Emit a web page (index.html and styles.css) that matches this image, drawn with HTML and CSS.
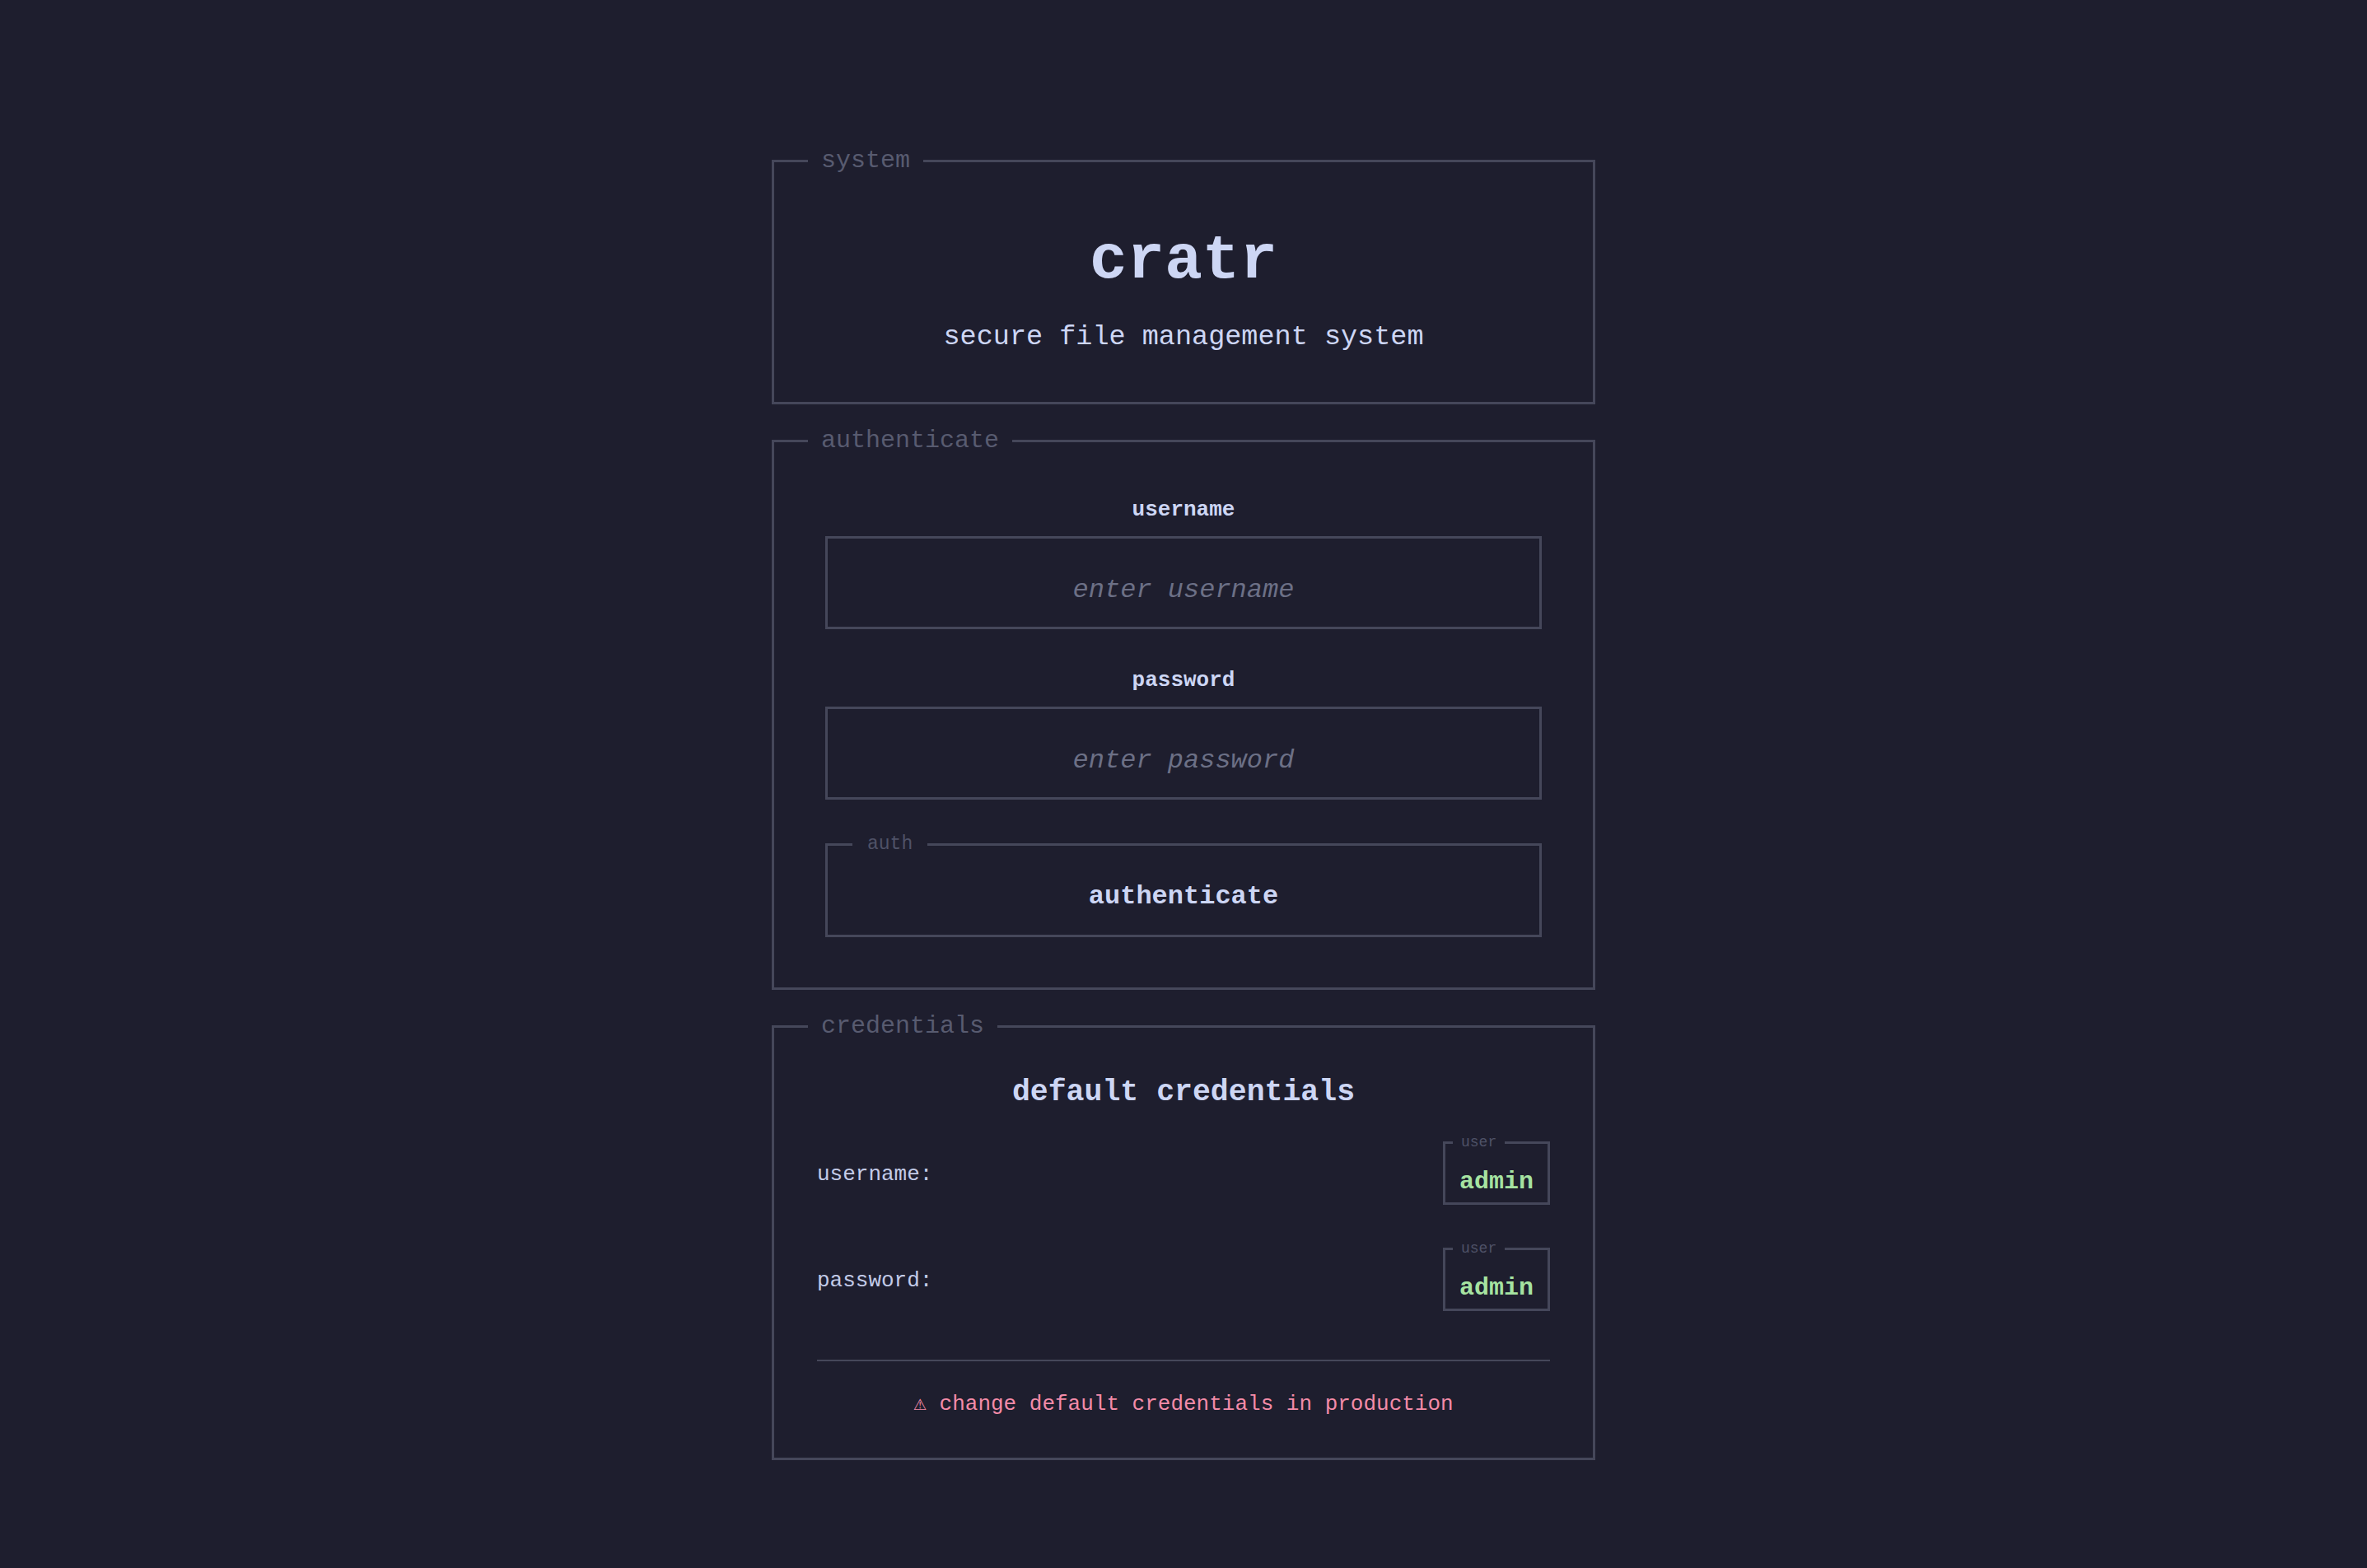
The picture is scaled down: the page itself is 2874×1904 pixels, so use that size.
FILE: index.html
```html
<!DOCTYPE html>
<html lang="en">
<head>
   <meta charset="UTF-8">
   <meta name="viewport" content="width=device-width">
   <title>cratr - login</title>
   <link rel="stylesheet" href="styles.css">
</head>
<body>
   <main class="login">

       <fieldset class="panel">
           <legend>system</legend>
           <div class="brand">
               <h1>cratr</h1>
               <p class="tagline">secure file management system</p>
           </div>
       </fieldset>

       <fieldset class="panel">
           <legend>authenticate</legend>
           <form class="login-form" onsubmit="return false">
               <label for="username">username</label>
               <input id="username" type="text" placeholder="enter username">

               <label for="password" class="second">password</label>
               <input id="password" type="password" placeholder="enter password">

               <fieldset class="submit-box">
                   <legend>auth</legend>
                   <button type="submit">authenticate</button>
               </fieldset>
           </form>
       </fieldset>

       <fieldset class="panel">
           <legend>credentials</legend>
           <div class="creds">
               <h2>default credentials</h2>

               <div class="cred-row">
                   <span class="cred-key">username:</span>
                   <fieldset class="cred-value">
                       <legend>user</legend>
                       <span>admin</span>
                   </fieldset>
               </div>

               <div class="cred-row second">
                   <span class="cred-key">password:</span>
                   <fieldset class="cred-value">
                       <legend>user</legend>
                       <span>admin</span>
                   </fieldset>
               </div>

               <hr class="divider">
               <p class="warning">⚠ change default credentials in production</p>
           </div>
       </fieldset>

   </main>
</body>
</html>
```

FILE: styles.css
```css
body {
    margin: 0;
    padding: 177px 0 60px;
    background-color: #1e1e2e;
    color: #cdd6f4;
    font-family: "Liberation Mono", "DejaVu Sans Mono", monospace;
}
.login {
    width: 1000px;
    margin: 0 auto;
}

/* outer panels */
.panel {
    margin: 0 0 26px;
    padding: 0;
    border: 3px solid #45475a;
}
.panel:last-child { margin-bottom: 0; }
.panel > legend {
    margin-left: 41px;
    padding: 0 16px;
    font-size: 30px;
    line-height: 36px;
    color: #585b70;
}

/* system */
.brand {
    text-align: center;
    padding-bottom: 59px;
}
.brand h1 {
    margin: 59px 0 0;
    font-size: 76px;
    line-height: 91px;
    font-weight: bold;
}
.tagline {
    margin: 26px 0 0;
    font-size: 33.5px;
    line-height: 40px;
}

/* authenticate */
.login-form {
    padding: 50px 62px 61px;
}
.login-form label {
    display: block;
    text-align: center;
    font-size: 26px;
    line-height: 32px;
    font-weight: bold;
}
.login-form label.second { margin-top: 46px; }
.login-form input {
    display: block;
    box-sizing: border-box;
    width: 100%;
    height: 113px;
    margin-top: 16px;
    padding: 18px 0 0;
    border: 3px solid #45475a;
    background: transparent;
    color: #cdd6f4;
    font-family: inherit;
    font-size: 32px;
    text-align: center;
    outline: none;
}
.login-form input::placeholder {
    color: #6c7086;
    font-style: italic;
}
.submit-box {
    margin: 40px 0 0;
    padding: 0;
    border: 3px solid #45475a;
}
.submit-box legend {
    margin-left: 30px;
    padding: 0 18px;
    font-size: 23px;
    line-height: 28px;
    color: #4f5267;
}
.submit-box button {
    display: block;
    width: 100%;
    padding: 30px 0 26px;
    border: 0;
    background: none;
    color: #cdd6f4;
    font-family: inherit;
    font-size: 32px;
    line-height: 40px;
    font-weight: bold;
    cursor: pointer;
}

/* credentials */
.creds {
    padding: 0 52px 49px;
}
.creds h2 {
    margin: 41px 0 0;
    text-align: center;
    font-size: 36.5px;
    line-height: 44px;
    font-weight: bold;
}
.cred-row {
    display: flex;
    justify-content: space-between;
    align-items: center;
    margin-top: 27px;
}
.cred-row.second { margin-top: 42px; }
.cred-key {
    margin-top: 13px;
    font-size: 26px;
    line-height: 32px;
    color: #c3cbe8;
}
.cred-value {
    margin: 0;
    padding: 19px 17px 7px;
    border: 3px solid #45475a;
}
.cred-value legend {
    margin-left: -8px;
    padding: 0 10px;
    font-size: 18px;
    line-height: 22px;
    color: #4f5267;
}
.cred-value span {
    display: block;
    font-size: 30px;
    line-height: 36px;
    font-weight: bold;
    color: #a6e3a1;
}
.divider {
    margin: 59px 0 0;
    height: 2px;
    border: 0;
    background-color: #45475a;
}
.warning {
    margin: 36px 0 0;
    text-align: center;
    font-size: 26px;
    line-height: 32px;
    color: #f38ba8;
}
```
